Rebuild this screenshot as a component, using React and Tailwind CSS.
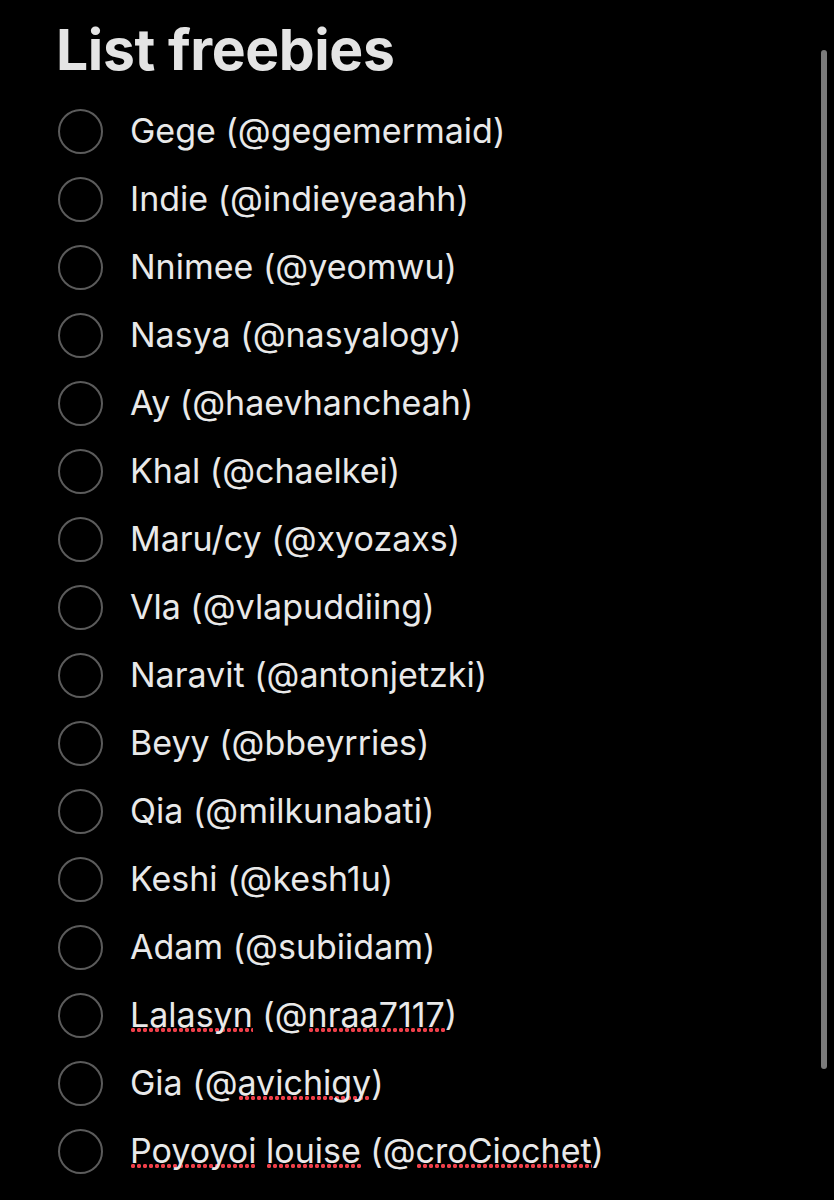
const people = [
  { name: 'Gege', handle: 'gegemermaid' },
  { name: 'Indie', handle: 'indieyeaahh' },
  { name: 'Nnimee', handle: 'yeomwu' },
  { name: 'Nasya', handle: 'nasyalogy' },
  { name: 'Ay', handle: 'haevhancheah' },
  { name: 'Khal', handle: 'chaelkei' },
  { name: 'Maru/cy', handle: 'xyozaxs' },
  { name: 'Vla', handle: 'vlapuddiing' },
  { name: 'Naravit', handle: 'antonjetzki' },
  { name: 'Beyy', handle: 'bbeyrries' },
  { name: 'Qia', handle: 'milkunabati' },
  { name: 'Keshi', handle: 'kesh1u' },
  { name: 'Adam', handle: 'subiidam' },
  { name: 'Lalasyn', handle: 'nraa7117', badName: true, badHandle: true },
  { name: 'Gia', handle: 'avichigy', badHandle: true },
  { name: 'Poyoyoi louise', handle: 'croCiochet', badName: true, badHandle: true },
]

// spell-check dots drawn as a repeating background under the word
const squiggle =
  'bg-[radial-gradient(circle,#ee3f49_1.9px,transparent_2.4px)] bg-[length:6px_6px] bg-repeat-x bg-[position:left_0_bottom_2px]'

function Misspelled({ text, on }) {
  if (!on) return text
  return text.split(' ').map((w, i, arr) => (
    <span key={i}>
      <span className={squiggle}>{w}</span>
      {i < arr.length - 1 ? ' ' : ''}
    </span>
  ))
}

export default function App() {
  return (
    <div className="relative min-h-[1200px] bg-black text-[#e9e9e9] font-['Inter',sans-serif] overflow-hidden">
      <div className="pl-[56px] pt-[14px]">
        <h1 className="text-[57px] leading-[72px] font-bold tracking-[-0.4px] text-[#e4e4e4]">List freebies</h1>
        <ul className="mt-[11px]">
          {people.map((p) => (
            <li key={p.handle} className="flex items-center h-[68px]">
              <span className="w-[45px] h-[45px] ml-[2px] rounded-full border-[2.5px] border-[#5b5b5b] shrink-0" />
              <span className="ml-[27px] text-[34px] leading-none">
                <Misspelled text={p.name} on={p.badName} /> (@
                {p.badHandle ? <span className={squiggle}>{p.handle}</span> : p.handle})
              </span>
            </li>
          ))}
        </ul>
      </div>
      <div className="absolute left-[821px] top-[50px] w-[6px] h-[1019px] rounded-full bg-[#7b7b7b]" />
    </div>
  )
}
